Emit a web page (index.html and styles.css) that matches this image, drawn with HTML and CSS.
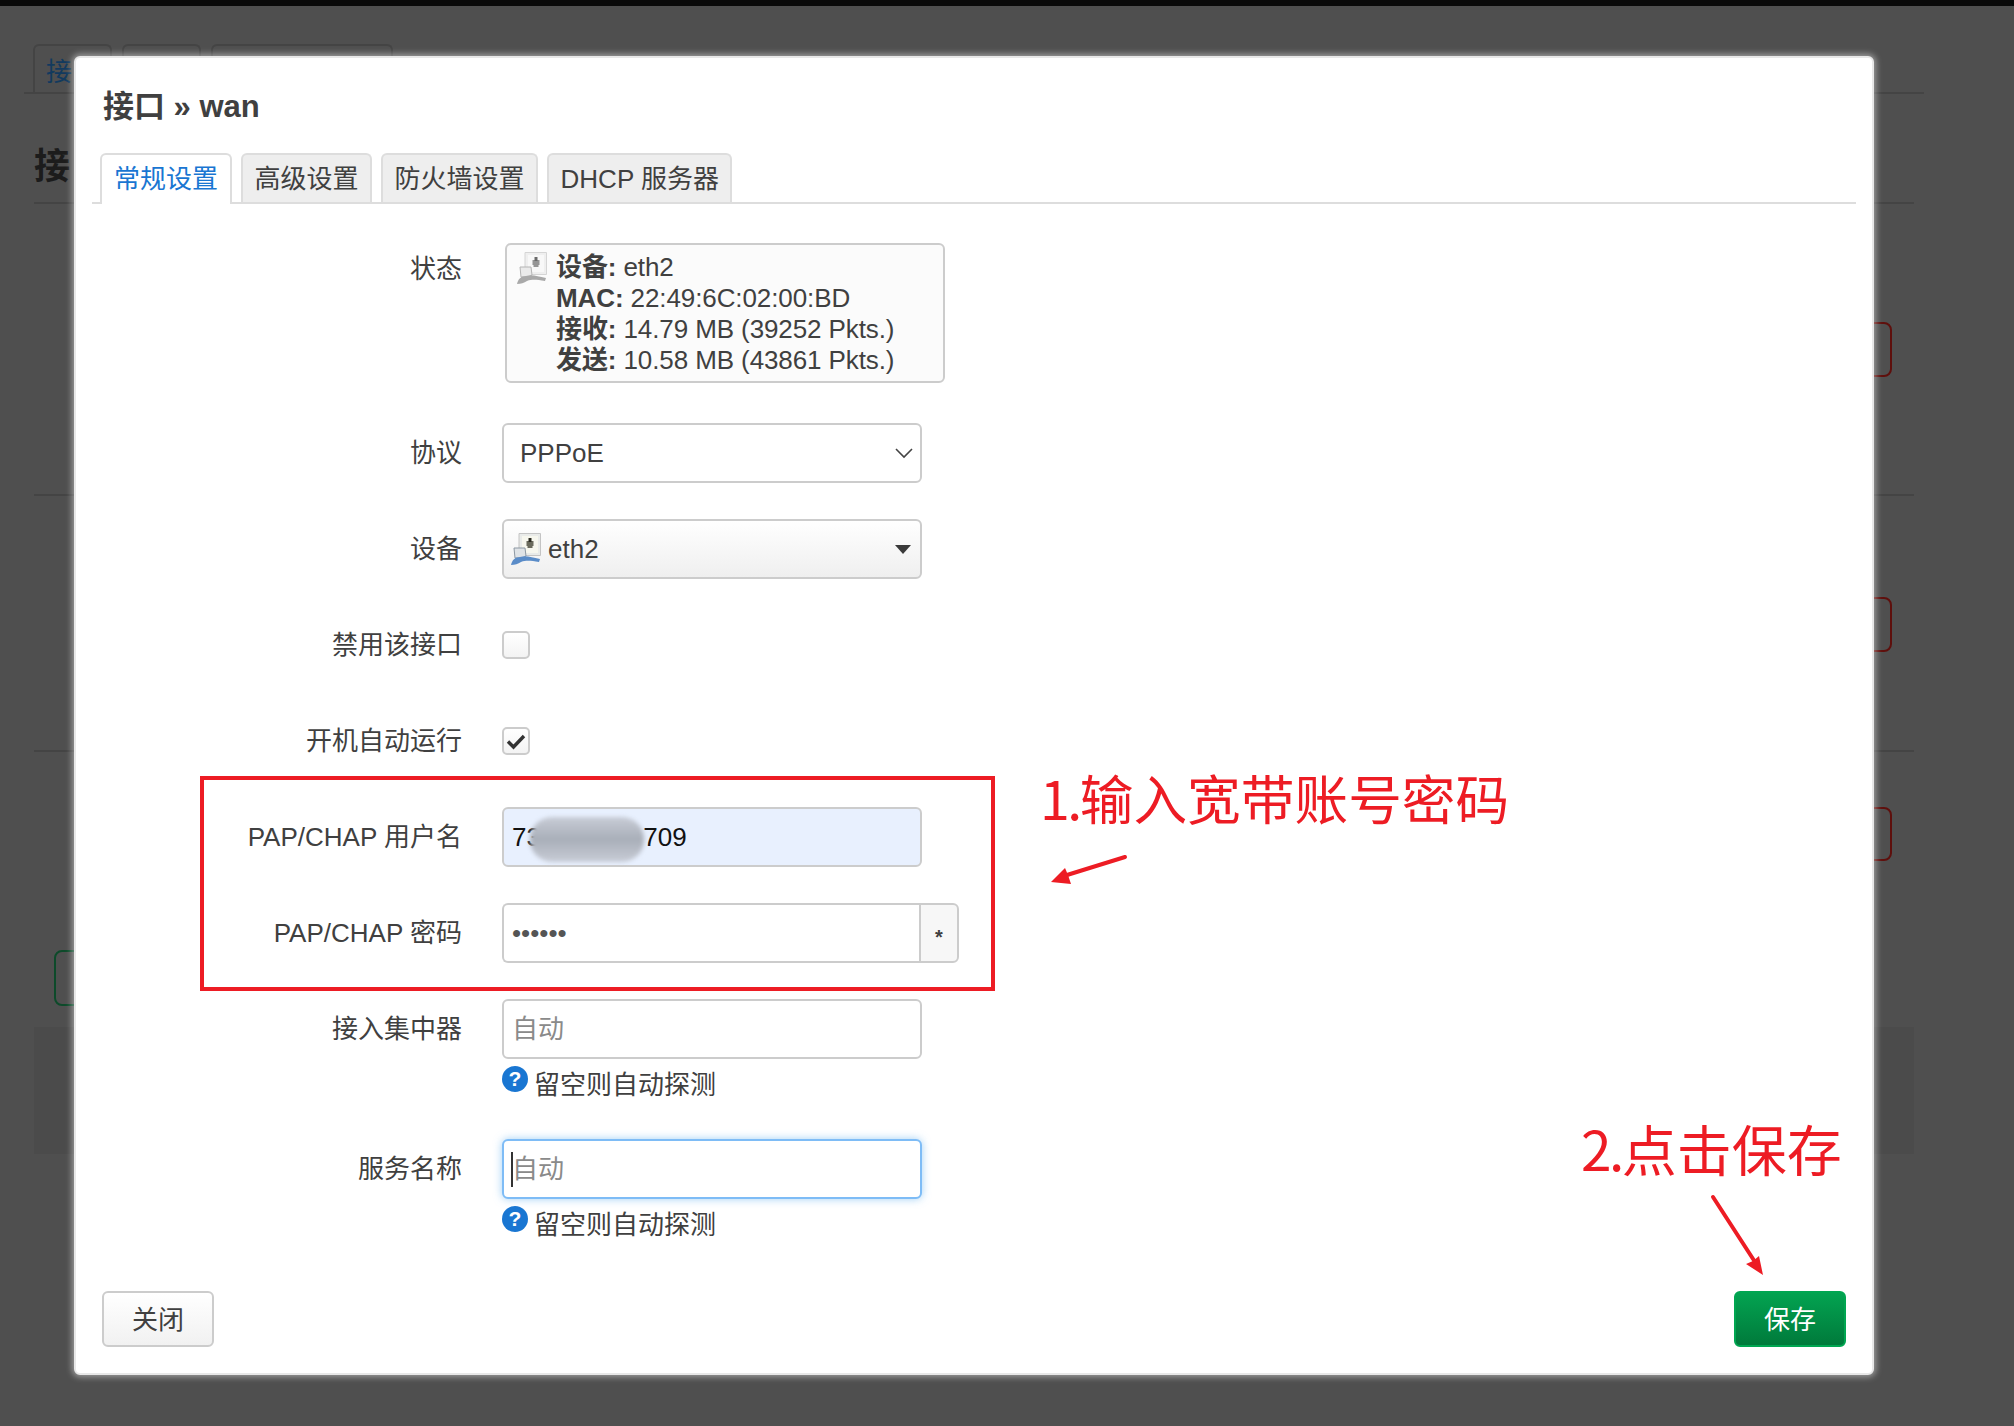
FILE: index.html
```html
<!DOCTYPE html>
<html lang="zh-CN">
<head>
<meta charset="utf-8">
<title>接口 » wan</title>
<link rel="stylesheet" href="styles.css">
</head>
<body>
<div class="page">
  <div class="topbar"></div>
  <div class="bg-tabs">
    <div class="bg-tab bg-tab-active">接口</div>
    <div class="bg-tab bg-tab-two"></div>
    <div class="bg-tab bg-tab-three"></div>
  </div>
  <h2 class="bg-title">接口</h2>
  <div class="bg-section bg-section-one"><div class="bg-danger"></div></div>
  <div class="bg-section bg-section-two"><div class="bg-danger"></div></div>
  <div class="bg-section bg-section-three"><div class="bg-danger bg-danger-short"></div><div class="bg-add"></div></div>
  <div class="bg-panel"></div>
</div>

<div class="dialog">
  <h3 class="dialog-title">接口 » wan</h3>
  <ul class="tabs">
    <li class="tab tab-active">常规设置</li>
    <li class="tab">高级设置</li>
    <li class="tab">防火墙设置</li>
    <li class="tab">DHCP 服务器</li>
  </ul>

  <div class="row row-status">
    <label class="label label-status">状态</label>
    <div class="status-box">
      <svg class="port-icon port-icon-grey" viewBox="0 0 30 32"><use href="#port"/></svg>
      <div class="status-lines">
        <div><b>设备:</b> eth2</div>
        <div><b>MAC:</b> 22:49:6C:02:00:BD</div>
        <div><b>接收:</b> 14.79 MB (39252 Pkts.)</div>
        <div><b>发送:</b> 10.58 MB (43861 Pkts.)</div>
      </div>
    </div>
  </div>

  <div class="row">
    <label class="label">协议</label>
    <div class="select">
      <span>PPPoE</span>
      <svg class="chevron" viewBox="0 0 18 12"><path d="M1 2l8 8 8-8" fill="none" stroke="#444" stroke-width="1.6"/></svg>
    </div>
  </div>

  <div class="row">
    <label class="label">设备</label>
    <div class="select select-device">
      <svg class="port-icon" viewBox="0 0 30 32"><use href="#port"/></svg>
      <span>eth2</span>
      <svg class="caret-down" viewBox="0 0 16 9"><path d="M0 0h16l-8 9z" fill="#3a3a3a"/></svg>
    </div>
  </div>

  <div class="row">
    <label class="label">禁用该接口</label>
    <div class="check-cell"><span class="check"></span></div>
  </div>

  <div class="row">
    <label class="label">开机自动运行</label>
    <div class="check-cell">
      <span class="check"><svg viewBox="0 0 24 24"><path d="M4 12.5l5.5 5.5L20 7" fill="none" stroke="#333" stroke-width="3.4"/></svg></span>
    </div>
  </div>

  <div class="row">
    <label class="label">PAP/CHAP 用户名</label>
    <div class="field">
      <input class="input input-filled" type="text" value="73               709" readonly>
      <span class="smudge"></span>
    </div>
  </div>

  <div class="row">
    <label class="label">PAP/CHAP 密码</label>
    <div class="group">
      <input class="input input-group" type="password" value="123456" readonly>
      <span class="addon">*</span>
    </div>
  </div>

  <div class="row row-hinted">
    <label class="label">接入集中器</label>
    <div>
      <input class="input" type="text" placeholder="自动" readonly>
      <div class="hint"><span class="hint-icon">?</span><span>留空则自动探测</span></div>
    </div>
  </div>

  <div class="row row-hinted">
    <label class="label">服务名称</label>
    <div>
      <div class="field">
        <input class="input input-focus" type="text" placeholder="自动" readonly>
        <span class="text-caret"></span>
      </div>
      <div class="hint"><span class="hint-icon">?</span><span>留空则自动探测</span></div>
    </div>
  </div>

  <div class="footer">
    <button class="btn btn-close" type="button">关闭</button>
    <button class="btn btn-save" type="button">保存</button>
  </div>
</div>

<div class="red-box"></div>
<div class="note note-one"><span class="note-num">1.</span>输入宽带账号密码</div>
<div class="note note-two"><span class="note-num">2.</span>点击保存</div>
<svg class="arrows" viewBox="0 0 2014 1426">
  <defs>
    <g id="port">
      <path d="M8 .5h21.5v22H8z" fill="#e9ebe9" stroke="#c4c4c4"/>
      <path d="M11 3h16v17H11z" fill="#f7f7ee"/>
      <path d="M15.500 8h7v5h-1v2h-5v-2h-1z" fill="#6a6a5c"/>
      <path d="M17.500 5h3v4h-3z" fill="#2c2c22"/>
      <path d="M3 15h11l1 8-4 2H4z" fill="#dfe3e6" stroke="#8d98a3"/>
      <path d="M0 32c1-5 4-8 9-8 6-2 11 0 20 2l-1 3c-8-1-12-2-18 0-3 2-6 3-10 3z" fill="#5a8cc8"/>
    </g>
  </defs>
  <path d="M1125 857 1067 875" stroke="#ed1c24" stroke-width="4" stroke-linecap="round" fill="none"/>
  <path d="M1051 882 1065 868 1068 875 1071 884z" fill="#ed1c24"/>
  <path d="M1713 1197 1755 1262" stroke="#ed1c24" stroke-width="4" stroke-linecap="round" fill="none"/>
  <path d="M1763 1275 1746 1264 1753 1261 1759 1256z" fill="#ed1c24"/>
</svg>
</body>
</html>
```
FILE: styles.css
```css
* { box-sizing: border-box; }
html, body { margin: 0; height: 1426px; overflow: hidden; }
body {
  position: relative;
  background: #4f4f4f;
  font-family: "Liberation Sans", "Noto Sans CJK SC", sans-serif;
  font-size: 26px;
  color: #404040;
}

/* dimmed page behind the dialog */
.topbar { height: 6px; background: #0a0a0a; }
.bg-tabs {
  display: flex;
  gap: 10px;
  margin: 38px 90px 0 24px;
  padding-left: 9px;
  height: 50px;
  border-bottom: 2px solid #444;
}
.bg-tab {
  width: 79px;
  height: 50px;
  border: 2px solid #444;
  border-bottom: 0;
  border-radius: 6px 6px 0 0;
}
.bg-tab-active { color: #123a5e; padding: 5px 11px; white-space: nowrap; overflow: hidden; }
.bg-tab-three { width: 182px; }
.bg-title {
  margin: 0;
  padding: 52px 0 0 34px;
  height: 108px;
  font-size: 36px;
  line-height: 42px;
  letter-spacing: 5px;
  color: #1c1c1c;
}
.bg-section {
  display: flex;
  flex-direction: column;
  margin: 0 100px 0 34px;
  border-top: 2px solid #444;
}
.bg-section-one { height: 292px; padding-top: 118px; }
.bg-section-two { height: 256px; padding-top: 101px; }
.bg-section-three { height: 277px; padding-top: 55px; }
.bg-danger {
  align-self: flex-end;
  width: 100px;
  height: 55px;
  margin-right: 22px;
  border: 2px solid #5e0f0c;
  border-radius: 8px;
}
.bg-danger-short { height: 54px; }
.bg-add {
  width: 60px;
  height: 56px;
  margin: 89px 0 0 20px;
  border: 2px solid #0d4a2a;
  border-radius: 8px;
}
.bg-panel {
  height: 127px;
  margin: 0 100px 0 34px;
  background: #4b4b4b;
}

/* dialog */
.dialog {
  position: absolute;
  left: 74px;
  top: 56px;
  width: 1800px;
  height: 1319px;
  display: flex;
  flex-direction: column;
  background: #fff;
  border: 2px solid #e8e8e8;
  border-radius: 6px;
  box-shadow: 0 0 6px 2px rgba(255, 255, 255, .45);
}
.dialog-title {
  margin: 30px 0 0 27px;
  font-size: 31px;
  line-height: 38px;
  font-weight: 700;
  color: #404040;
}
.tabs {
  display: flex;
  gap: 9px;
  margin: 27px 16px 39px;
  padding: 0 0 0 8px;
  list-style: none;
  height: 51px;
  border-bottom: 2px solid #ddd;
}
.tab {
  height: 49px;
  padding: 0 11.5px;
  line-height: 48px;
  white-space: nowrap;
  background: #eee;
  border: 2px solid #ddd;
  border-bottom: 0;
  border-radius: 6px 6px 0 0;
}
.tab-active {
  height: 51px;
  padding: 0 12px;
  background: #fff;
  color: #1976d2;
}

/* form */
.row {
  display: grid;
  grid-template-columns: 386px 420px;
  column-gap: 40px;
  margin-bottom: 36px;
  min-height: 60px;
}
.row-status { margin-bottom: 40px; }
.row-hinted { margin-bottom: 0; min-height: 140px; }
.row-hinted:last-of-type { min-height: 0; }
.label {
  height: 60px;
  text-align: right;
  line-height: 61px;
  white-space: nowrap;
}
.label-status { line-height: 52px; }
.status-box {
  display: flex;
  width: 440px;
  height: 140px;
  margin-left: 3px;
  padding: 7px 10px;
  gap: 9px;
  background: #fbfbfb;
  border: 2px solid #ccc;
  border-radius: 6px;
  white-space: nowrap;
}
.status-lines { line-height: 31px; letter-spacing: -.1px; }
.status-lines b { font-weight: 700; }
.port-icon { width: 30px; height: 32px; flex: none; }
.port-icon-grey { filter: grayscale(1) opacity(.7); }

.select {
  display: flex;
  align-items: center;
  height: 60px;
  padding: 0 4px 0 16px;
  background: #fff;
  border: 2px solid #ccc;
  border-radius: 6px;
}
.select > span { flex: 1; }
.chevron { width: 18px; height: 12px; margin-right: 3px; }
.select-device {
  padding: 0 6px 0 7px;
  gap: 7px;
  background: linear-gradient(#fff, #efefef);
}
.caret-down { width: 16px; height: 9px; margin-right: 3px; }
.check-cell { display: flex; align-items: center; height: 60px; }
.check {
  display: block;
  width: 28px;
  height: 28px;
  background: linear-gradient(#fff, #f3f3f3);
  border: 2px solid #ccc;
  border-radius: 5px;
}
.check svg { display: block; width: 24px; height: 24px; }

.field { position: relative; }
.input {
  display: block;
  width: 100%;
  height: 60px;
  padding: 0 8px;
  font: inherit;
  color: #222;
  background: #fff;
  border: 2px solid #ccc;
  border-radius: 6px;
  outline: 0;
  white-space: pre;
}
.input::placeholder { color: #8a8a8a; opacity: 1; }
.input-filled { background: #e8f0fe; color: #111; word-spacing: -.4px; }
.input-focus {
  border-color: #7ebcf6;
  box-shadow: 0 0 8px rgba(82, 168, 236, .55);
}
.smudge {
  position: absolute;
  left: 28px;
  top: 10px;
  width: 114px;
  height: 45px;
  background: linear-gradient(#c8ccd6, #a9afb9 50%, #c8ccd6);
  border-radius: 22px;
  filter: blur(2px);
}
.text-caret {
  position: absolute;
  left: 9px;
  top: 13px;
  width: 2px;
  height: 35px;
  background: #333;
}
.group { display: flex; width: 457px; height: 60px; }
.input-group { width: 417px; flex: none; border-right: 0; border-radius: 6px 0 0 6px; color: #555; }
.addon {
  flex: 1;
  padding-top: 21px;
  text-align: center;
  font-weight: 700;
  font-size: 20px;
  background: #f7f7f7;
  border: 2px solid #ccc;
  border-radius: 0 6px 6px 0;
}
.hint {
  display: flex;
  gap: 6px;
  height: 43px;
  margin-top: 7px;
  white-space: nowrap;
}
.hint > span:last-child { padding-top: 1px; line-height: 36px; }
.hint-icon {
  flex: none;
  width: 26px;
  height: 26px;
  border-radius: 50%;
  background: #1976d2;
  color: #fff;
  font-weight: 700;
  font-size: 21px;
  line-height: 26px;
  text-align: center;
}
.footer {
  display: flex;
  justify-content: space-between;
  margin-top: auto;
  padding: 0 26px 26px 26px;
}
.btn {
  height: 56px;
  padding: 0 0 3px;
  font: inherit;
  border-radius: 6px;
  cursor: pointer;
}
.btn-close {
  width: 112px;
  color: #404040;
  background: linear-gradient(#fff, #f1f1f1);
  border: 2px solid #ccc;
}
.btn-save {
  width: 112px;
  color: #fff;
  background: linear-gradient(#03a351, #007a3b);
  border: 2px solid #00a651;
}

/* annotations drawn over the screenshot */
.red-box {
  position: absolute;
  left: 200px;
  top: 776px;
  width: 795px;
  height: 215px;
  border: 4px solid #ed1c24;
}
.note {
  position: absolute;
  font-family: "Noto Sans CJK SC", sans-serif;
  font-size: 53.7px;
  line-height: 60px;
  color: #ed1c24;
  white-space: nowrap;
}
.note-num { letter-spacing: -2.5px; }
.note-one { left: 1040px; top: 767px; }
.note-two { left: 1581px; top: 1117px; font-size: 55px; }
.arrows {
  position: absolute;
  left: 0;
  top: 0;
  width: 2014px;
  height: 1426px;
  pointer-events: none;
}
```
